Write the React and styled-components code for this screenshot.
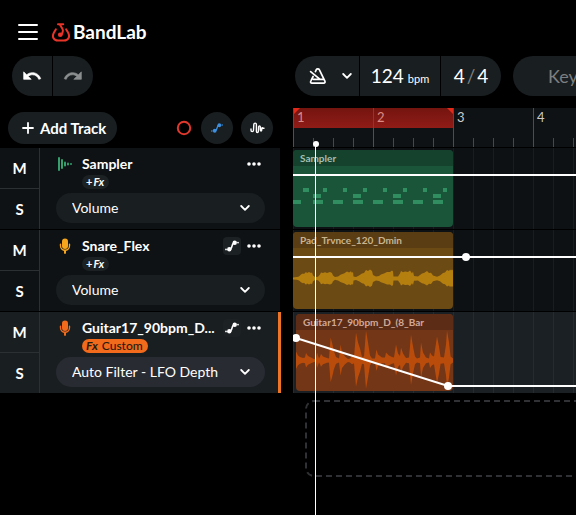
import React, { useEffect, useState } from "react";
import styled, { createGlobalStyle, css } from "styled-components";

const GlobalStyle = createGlobalStyle`
  *, *::before, *::after { box-sizing: border-box; }
  body { margin: 0; background: #000; color: #fff; font-family: Lato, "Open Sans", sans-serif; }
  button, input, select { font: inherit; color: inherit; border: 0; margin: 0; padding: 0; background: none; }
  button, select { cursor: pointer; }
  svg { display: block; flex: none; }
`;

const Page = styled.div`
  display: flex;
  flex-direction: column;
  min-height: 100vh;
  overflow: hidden;
`;

const Header = styled.header`
  display: flex;
  align-items: center;
  gap: 12px;
  height: 56px;
  padding: 8px 16px 0;
`;

const IconButton = styled.button`
  display: flex;
  align-items: center;
  justify-content: center;
  width: ${(p) => p.$size}px;
  height: ${(p) => p.$size}px;
  border-radius: ${(p) => p.$radius ?? 16}px;
  background: ${(p) => p.$bg ?? "transparent"};
`;

const Brand = styled.a`
  display: flex;
  align-items: center;
  gap: 3px;
  color: #fff;
  font-size: 19px;
  line-height: 20px;
  font-weight: 700;
  text-decoration: none;
`;

const Toolbar = styled.div`
  display: grid;
  grid-template-columns: 283px minmax(0, 1fr);
  padding-left: 12px;
  height: 40px;
`;

const ToolGroup = styled.div`
  display: flex;
  gap: ${(p) => p.$gap ?? 1}px;
`;

const segment = css`
  display: flex;
  align-items: center;
  justify-content: center;
  flex: none;
  height: 40px;
  width: ${(p) => p.$width}px;
  background: #191e20;
  &:first-child { border-radius: 20px 0 0 20px; }
  &:last-child { border-radius: 0 20px 20px 0; }
`;

const SegmentButton = styled.button`
  ${segment}
  gap: 2px;
  font-size: 19px;
  line-height: 24px;
`;

const MetronomeSegment = styled.div`
  ${segment}
  justify-content: flex-start;
  gap: 12px;
  padding-left: 14px;
`;

const Tempo = styled.label`
  ${segment}
  align-items: baseline;
  gap: 3px;
  padding-top: 8px;
  font-size: 11px;
  line-height: 24px;
  input { width: 34px; font-size: 19px; line-height: 24px; }
`;

const Slash = styled.span`
  color: #7d8183;
`;

const KeyButton = styled.button`
  flex: none;
  width: 160px;
  height: 40px;
  padding-left: 35px;
  border-radius: 20px;
  background: #191e20;
  color: #7b7f81;
  font-size: 18px;
  line-height: 24px;
  text-align: left;
`;

const Workspace = styled.main`
  display: grid;
  flex: 1;
  grid-template-columns: 281px minmax(0, 1fr);
  column-gap: 12px;
  margin-top: 12px;
`;

const TrackActions = styled.div`
  display: flex;
  align-items: center;
  height: 40px;
  padding: 0 8px;
  gap: 8px;
`;

const AddTrack = styled.button`
  display: flex;
  align-items: center;
  gap: 6px;
  height: 32px;
  padding: 0 11px 0 14px;
  margin-right: auto;
  border-radius: 16px;
  background: #191e20;
  font-size: 15px;
  line-height: 20px;
  font-weight: 700;
`;

const TrackRow = styled.section`
  display: grid;
  grid-template-columns: 40px minmax(0, 1fr);
  height: 81px;
  margin-bottom: 1px;
  background: ${(p) => (p.$selected ? "#191e20" : "#0e1214")};
  border-right: ${(p) => (p.$selected ? "3px solid #ee7428" : "1px solid #000")};
`;

const MuteSolo = styled.div`
  display: grid;
  grid-template-rows: 40px 1fr;
  border-right: 1px solid #2b3033;
  button { font-size: 15px; font-weight: 700; line-height: 20px; }
  button + button { border-top: 1px solid #2b3033; }
`;

const TrackInfo = styled.div`
  display: flex;
  flex-direction: column;
  align-items: flex-start;
  width: 225px;
  padding: 5px 0 0 16px;
`;

const TrackHead = styled.div`
  display: flex;
  align-items: center;
  width: 205px;
  height: 22px;
  gap: 8px;
`;

const TrackName = styled.h2`
  flex: 1;
  min-width: 0;
  margin: 0;
  white-space: nowrap;
  font-size: 14px;
  line-height: 20px;
  font-weight: 700;
`;

const HeadActions = styled.div`
  display: flex;
  align-items: center;
  margin-left: -8px;
  gap: 6px;
`;

const FxBadge = styled.button`
  display: flex;
  align-items: center;
  gap: ${(p) => (p.$custom ? 4 : 1)}px;
  height: 14px;
  margin: 0 0 4px 26px;
  padding: 0 5px 0 4px;
  border-radius: 7px;
  background: ${(p) => (p.$custom ? "#f26a1b" : "#1c2123")};
  color: ${(p) => (p.$custom ? "#2a1a12" : "#fff")};
  font-size: ${(p) => (p.$custom ? 12 : 11)}px;
  line-height: 14px;
  font-weight: ${(p) => (p.$custom ? 500 : 700)};
  em { font-weight: 700; }
`;

const SelectBox = styled.label`
  display: grid;
  align-items: center;
  width: 209px;
  height: 30px;
  border-radius: 15px;
  background: ${(p) => (p.$selected ? "#292b33" : "#191e20")};
  select, svg { grid-area: 1 / 1; }
  select {
    appearance: none;
    width: 100%;
    height: 30px;
    padding: 0 36px 0 16px;
    border-radius: 15px;
    font-size: 14px;
    line-height: 20px;
  }
  svg { justify-self: end; margin-right: 15px; pointer-events: none; }
`;

const Timeline = styled.div`
  position: relative;
  overflow: hidden;
`;

const Ruler = styled.div`
  display: flex;
  height: 39px;
  margin-bottom: 1px;
  background: #0e1214;
`;

const Bar = styled.div`
  flex: none;
  width: 80px;
  border-left: 1px solid ${(p) => (p.$loop ? "#65474a" : "#4a4e50")};
`;

const BarLabel = styled.div`
  position: relative;
  height: 20px;
  padding-left: 3px;
  font-size: 13px;
  line-height: 19px;
  color: ${(p) => (p.$loop ? "#dc8a82" : "#c9cbcc")};
  background: ${(p) => (p.$loop ? "linear-gradient(#74140f, #901c17)" : "none")};
  &::after {
    content: "";
    display: ${(p) => (p.$corner ? "block" : "none")};
    position: absolute;
    top: 0;
    ${(p) => (p.$corner === "right" ? "right: 0;" : "left: 0;")}
    width: 6px;
    height: 6px;
    background: #e22a1b;
    clip-path: ${(p) => (p.$corner === "right" ? "polygon(0 0, 100% 0, 100% 100%)" : "polygon(0 0, 100% 0, 0 100%)")};
  }
`;

const Beats = styled.div`
  height: 9px;
  margin-top: 10px;
  background: repeating-linear-gradient(90deg, transparent 0 19px, #44494b 19px 20px);
`;

const Lane = styled.div`
  position: relative;
  height: 81px;
  margin-bottom: 1px;
  padding: 2px 0 0 ${(p) => (p.$offset ? 3 : 0)}px;
  background:
    repeating-linear-gradient(90deg, rgba(255, 255, 255, 0.05) 0 1px, transparent 1px 20px),
    ${(p) => (p.$selected ? "#1b2024" : "#0d1114")};
`;

const Clip = styled.div`
  width: ${(p) => p.$width}px;
  height: 77px;
  border-radius: 4px;
  overflow: hidden;
  background: ${(p) => p.$body};
`;

const ClipTitle = styled.div`
  height: 16px;
  padding-left: 7px;
  white-space: nowrap;
  font-size: 10px;
  line-height: 16px;
  font-weight: 700;
  color: ${(p) => p.$ink};
  background: ${(p) => p.$bg};
`;

const Automation = styled.svg`
  position: absolute;
  inset: 0;
  width: 100%;
  height: 100%;
`;

const DropZone = styled.div`
  height: 78px;
  margin: 7px 0 0 12px;
  svg { width: 2400px; height: 78px; }
`;

const Playhead = styled.div`
  position: absolute;
  top: 36px;
  bottom: 0;
  left: 22px;
  width: 1px;
  background: #fff;
  &::before {
    content: "";
    position: absolute;
    top: -3px;
    left: -2px;
    width: 6px;
    height: 6px;
    border-radius: 3px;
    background: #fff;
  }
`;

const Chevron = () => (
  <svg width="10" height="8" viewBox="0 0 10 8" fill="none" stroke="#fff" strokeWidth="1.8" strokeLinecap="round" strokeLinejoin="round">
    <path d="M1.2 2 5 5.8 8.8 2" />
  </svg>
);

const UndoArrow = ({ flip, color }) => (
  <svg width="20" height="20" viewBox="0 0 24 24" fill={color} stroke={color} strokeWidth="0.8">
    <path
      transform={flip ? "translate(24 0) scale(-1 1)" : undefined}
      d="M12.5 8c-2.65 0-5.05.99-6.9 2.6L2 7v9h9l-3.62-3.62c1.39-1.16 3.16-1.88 5.12-1.88 3.54 0 6.55 2.31 7.6 5.5l2.37-.78C21.08 11.03 17.15 8 12.5 8z"
    />
  </svg>
);

const MenuIcon = () => (
  <svg width="20" height="18" viewBox="0 0 20 18" stroke="#fff" strokeWidth="2" strokeLinecap="round">
    <path d="M1 2h18M1 9h18M1 16h18" />
  </svg>
);

const LogoMark = () => (
  <svg width="18" height="19" viewBox="0 0 18 19" fill="none" stroke="#e8352a" strokeLinecap="round" strokeLinejoin="round">
    <path d="M3.8 6.4 2.1 9.2c-2.6 4.4-.6 8.4 4 8.4h5.8c4.6 0 6.6-4 4-8.4l-1.7-2.8" strokeWidth="2" />
    <path d="M6 1.3h5.2M7.8 1.5l2.6 4.2c.7 1.2.7 2 .3 3.1l-1.1 3" strokeWidth="2" />
    <circle cx="8.2" cy="11.8" r="2.3" fill="#e8352a" stroke="none" />
  </svg>
);

const Metronome = () => (
  <svg width="18" height="18" viewBox="0 0 18 18" fill="none" stroke="#fff" strokeWidth="1.7" strokeLinecap="round" strokeLinejoin="round">
    <path d="M6.4 4.6 7.3 2.7c.5-1.1 2.5-1.1 3 0l5.6 11.4c.5 1-.1 2-1.2 2H3c-1.2 0-1.8-1-1.2-2l2.3-4.6M1.6 4.6l9.2 7.6M4.4 12.3h10" />
  </svg>
);

const CurveIcon = ({ color, size }) => (
  <svg width={size} height={size} viewBox="0 0 14 14" fill={color}>
    <path d="M4.6 10.2c3.2 0 1.7-6.4 4.8-6.4" fill="none" stroke={color} strokeWidth="1.5" />
    <circle cx="4.3" cy="10.2" r="2.2" />
    <circle cx="9.7" cy="3.8" r="2.2" />
    <circle cx="1" cy="10.4" r="0.9" />
    <circle cx="13" cy="3.6" r="0.9" />
  </svg>
);

const WaveIcon = () => (
  <svg width="15" height="12" viewBox="0 0 15 12" fill="none" stroke="#fff" strokeWidth="1.4" strokeLinecap="round" strokeLinejoin="round">
    <path d="M1 7v1.2c0 1.9 2.4 1.9 2.5 0L3.8 2.6c.1-2 2.6-2 2.6 0v6.6c0 1.8 1.9 1.8 2 0l.2-4.4c.1-1.3 1.6-1.3 1.7 0l.1 3.4c.1 1 1.2 1 1.3 0l.1-2c.1-.6.8-.6 1 0h1.2" />
  </svg>
);

const Dots = () => (
  <svg width="14" height="14" viewBox="0 0 14 14" fill="#fff">
    <circle cx="2" cy="7" r="1.8" />
    <circle cx="7" cy="7" r="1.8" />
    <circle cx="12" cy="7" r="1.8" />
  </svg>
);

const SamplerIcon = () => (
  <svg width="18" height="14" viewBox="0 0 18 14" fill="#35a06e">
    <rect x="2" width="2" height="14" rx="1" />
    <rect x="5" y="2" width="2" height="10" rx="1" />
    <rect x="8" y="4.5" width="2" height="5" rx="1" />
    <rect x="11" y="5.5" width="2" height="3" rx="1" />
    <rect x="14" y="6" width="2" height="2" rx="1" />
  </svg>
);

const MicIcon = ({ color }) => (
  <svg width="18" height="16" viewBox="0 0 18 16" fill={color}>
    <rect x="6" y="0.5" width="6" height="10.6" rx="3" />
    <path d="M4.5 6.2v1.6a4.5 4.5 0 0 0 9 0V6.2M9 12.5V15" fill="none" stroke={color} strokeWidth="1.4" strokeLinecap="round" />
    <path d="M8 12h2v3.6H8z" />
  </svg>
);

const envelope = (points, mid) => {
  const top = points.map(([x, a]) => `${x} ${mid - a}`);
  const bottom = [...points].reverse().map(([x, a]) => `${x} ${mid + a * 0.94}`);
  return `M${top.join("L")}L${bottom.join("L")}Z`;
};

const padWave = [
  [0, 1], [4, 1.4], [6, 2], [8, 4], [10, 5], [11, 4.6], [13, 6.6], [14, 5.4], [16, 6.4], [18, 5.4], [19, 6], [20, 3], [22, 1.6],
  [25, 1.8], [27, 4], [28, 6], [30, 5.4], [32, 6.2], [34, 5.6], [37, 6.4], [39, 5.4], [40, 3], [42, 1.4],
  [45, 2], [48, 4], [51, 5], [54, 7], [56, 6], [58, 7.2], [59, 5.6], [60, 6.8], [60.5, 2], [63, 1.6],
  [66, 3], [69, 5], [71, 5.6], [73, 8.6], [75, 7.4], [77, 9], [79, 7.6], [80, 3.6], [83, 2], [86, 2.6],
  [88, 4], [91, 5], [94, 6.4], [97, 6.4], [99, 8], [100, 7], [100.5, 2], [105, 2],
  [107, 5], [108, 7.4], [110, 6.2], [112, 7], [115, 6.6], [117, 8], [119, 5], [120, 7], [121, 2.4], [125, 2],
  [127, 3.6], [129, 5], [131, 5.6], [134, 7.4], [136, 5.6], [138, 5.8], [140, 3], [144, 1.8],
  [147, 3], [150, 5.6], [152, 6], [154, 8.6], [156, 7.4], [157, 9], [158, 8], [159, 9], [160, 8],
];

const guitarWave = [
  [0, 9], [2, 5], [4, 3.4], [7, 2.4], [9, 3], [10, 7.4], [12, 4.4], [15, 3], [18, 1.6], [20, 1.4], [21, 8], [23, 2], [24, 4], [25, 6.6], [27, 4],
  [31, 2.4], [33, 2], [34.6, 23], [36, 18], [38, 9], [40, 3.4], [43, 2], [44.6, 16], [46, 8], [49, 4], [52, 1.6], [54, 2], [56, 4], [58, 3],
  [60, 28], [62, 18], [64, 12], [66, 3.4], [68, 4], [70, 30], [72, 18], [74, 5], [76, 2], [79, 2], [80.4, 11], [82, 6], [86, 3], [89, 3],
  [90, 8], [93, 5], [96, 3.4], [98, 3], [100, 16], [102, 7], [104, 4.4], [105, 13], [107, 7], [110, 2.4], [113, 3], [115, 26], [117, 14], [119, 4],
  [121, 2], [124, 3], [125, 18], [127, 8], [130, 3], [133, 2], [134, 8], [136, 5], [138, 4], [141, 24], [143, 14], [144.6, 3.4], [148, 3],
  [150, 16], [151, 30], [153, 18], [154.6, 4], [157, 2],
];

const notes = [
  [10, 22, 6], ...[30, 50, 70, 90, 110, 130, 150].map((x) => [x, 22, 4]),
  ...[20, 60, 100, 140].map((x) => [x, 28, 8]),
  [0, 34, 8], ...[20, 40, 60, 80, 100, 120, 140].map((x) => [x, 34, 10]),
];

const tracks = [
  { name: "Sampler", icon: <SamplerIcon />, param: "Volume" },
  { name: "Snare_Flex", icon: <MicIcon color="#f6a51d" />, param: "Volume", curve: true },
  { name: "Guitar17_90bpm_D...", icon: <MicIcon color="#f26a1b" />, param: "Auto Filter - LFO Depth", curve: true, selected: true },
];

const BAR_WIDTH = 80;
const TIMELINE_START = 293;
const visibleBars = () => Math.ceil((window.innerWidth - TIMELINE_START) / BAR_WIDTH);

function useVisibleBars() {
  const [bars, setBars] = useState(visibleBars);
  useEffect(() => {
    const update = () => setBars(visibleBars());
    window.addEventListener("resize", update);
    return () => window.removeEventListener("resize", update);
  }, []);
  return Math.max(bars, 2);
}

function Track({ name, icon, param, curve, selected }) {
  return (
    <TrackRow $selected={selected} aria-label={name}>
      <MuteSolo>
        <button aria-label={`Mute ${name}`}>M</button>
        <button aria-label={`Solo ${name}`}>S</button>
      </MuteSolo>
      <TrackInfo>
        <TrackHead>
          {icon}
          <TrackName>{name}</TrackName>
          <HeadActions>
            {curve && (
              <IconButton $size={18} $radius={4} $bg="#1c2124" aria-label="Toggle automation">
                <CurveIcon color="#fff" size={14} />
              </IconButton>
            )}
            <IconButton $size={14} aria-label="Track options"><Dots /></IconButton>
          </HeadActions>
        </TrackHead>
        {selected ? (
          <FxBadge $custom><em>Fx</em>Custom</FxBadge>
        ) : (
          <FxBadge>+<em>Fx</em></FxBadge>
        )}
        <SelectBox $selected={selected}>
          <select aria-label={`${name} automation parameter`} defaultValue={param}>
            <option>{param}</option>
          </select>
          <Chevron />
        </SelectBox>
      </TrackInfo>
    </TrackRow>
  );
}

export default function App() {
  const bars = useVisibleBars();
  return (
    <Page>
      <GlobalStyle />
      <Header>
        <IconButton $size={24} aria-label="Menu"><MenuIcon /></IconButton>
        <Brand href="#"><LogoMark />BandLab</Brand>
      </Header>

      <Toolbar>
        <ToolGroup>
          <SegmentButton $width={40} aria-label="Undo"><UndoArrow color="#fff" /></SegmentButton>
          <SegmentButton $width={40} aria-label="Redo"><UndoArrow flip color="#8c8f90" /></SegmentButton>
        </ToolGroup>
        <ToolGroup $gap={12}>
          <ToolGroup>
            <MetronomeSegment $width={64}>
              <IconButton $size={18} aria-label="Metronome"><Metronome /></IconButton>
              <IconButton $size={16} aria-label="Metronome settings"><Chevron /></IconButton>
            </MetronomeSegment>
            <Tempo $width={80}><input defaultValue="124" aria-label="Tempo" />bpm</Tempo>
            <SegmentButton $width={60}>4<Slash>/</Slash>4</SegmentButton>
          </ToolGroup>
          <KeyButton>Key</KeyButton>
        </ToolGroup>
      </Toolbar>

      <Workspace>
        <aside>
          <TrackActions>
            <AddTrack>
              <svg width="12" height="12" viewBox="0 0 12 12" stroke="#fff" strokeWidth="1.8" strokeLinecap="round">
                <path d="M6 1v10M1 6h10" />
              </svg>
              Add Track
            </AddTrack>
            <IconButton $size={18} aria-label="Record">
              <svg width="16" height="16" viewBox="0 0 16 16" fill="none" stroke="#e0382c" strokeWidth="2">
                <circle cx="8" cy="8" r="6.2" />
              </svg>
            </IconButton>
            <IconButton $size={32} $bg="#191e20" aria-label="Automation"><CurveIcon color="#3d8fe0" size={12} /></IconButton>
            <IconButton $size={32} $bg="#191e20" aria-label="Warp"><WaveIcon /></IconButton>
          </TrackActions>
          {tracks.map((t) => <Track key={t.name} {...t} />)}
        </aside>

        <Timeline>
          <Ruler>
            {Array.from({ length: bars }, (_, i) => (
              <Bar key={i} $loop={i < 2}>
                <BarLabel $loop={i < 2} $corner={["left", "right"][i]}>{i + 1}</BarLabel>
                <Beats />
              </Bar>
            ))}
          </Ruler>

          <Lane>
            <Clip $width={160} $body="#1a5539">
              <ClipTitle $bg="#14422d" $ink="#a5bfb0">Sampler</ClipTitle>
              <svg width="160" height="61" viewBox="0 0 160 61" fill="#318e60" shapeRendering="crispEdges">
                {notes.map(([x, y, w]) => <rect key={`${x}-${y}`} x={x} y={y} width={w} height="4" />)}
              </svg>
            </Clip>
            <Automation stroke="#fff" strokeWidth="2"><line x1="0" y1="27" x2="100%" y2="27" /></Automation>
          </Lane>

          <Lane>
            <Clip $width={160} $body="#6c4a14">
              <ClipTitle $bg="#5a3d12" $ink="#c9b490">Pad_Trvnce_120_Dmin</ClipTitle>
              <svg width="160" height="61" viewBox="0 0 160 61"><path d={envelope(padWave, 30.5)} fill="#b57f10" /></svg>
            </Clip>
            <Automation stroke="#fff" strokeWidth="2">
              <line x1="0" y1="27" x2="100%" y2="27" />
              <circle cx="173" cy="27" r="3" fill="#fff" />
            </Automation>
          </Lane>

          <Lane $selected $offset>
            <Clip $width={157} $body="#733617">
              <ClipTitle $bg="#5d2c16" $ink="#d0a996">Guitar17_90bpm_D_(8_Bar</ClipTitle>
              <svg width="157" height="61" viewBox="0 0 157 61"><path d={envelope(guitarWave, 30.5)} fill="#b94c0b" /></svg>
            </Clip>
            <Automation stroke="#fff" strokeWidth="2" fill="none">
              <path d="M3 26 155 74H4000" />
              <circle cx="3" cy="26" r="3" fill="#fff" />
              <circle cx="155" cy="74" r="3" fill="#fff" />
            </Automation>
          </Lane>

          <DropZone>
            <svg viewBox="0 0 2400 78" fill="none" stroke="#303134" strokeWidth="2" strokeDasharray="6 4">
              <rect x="1" y="1" width="2398" height="75" rx="8" />
            </svg>
          </DropZone>
          <Playhead />
        </Timeline>
      </Workspace>
    </Page>
  );
}
